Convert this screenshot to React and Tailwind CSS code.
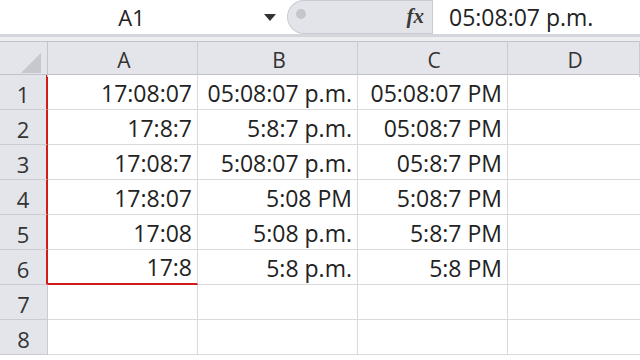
import React from 'react';

const cols = ['A', 'B', 'C', 'D'];

const rows = [
  ['17:08:07', '05:08:07 p.m.', '05:08:07 PM'],
  ['17:8:7', '5:8:7 p.m.', '05:08:7 PM'],
  ['17:08:7', '5:08:07 p.m.', '05:8:7 PM'],
  ['17:8:07', '5:08 PM', '5:08:7 PM'],
  ['17:08', '5:08 p.m.', '5:8:7 PM'],
  ['17:8', '5:8 p.m.', '5:8 PM'],
  ['', '', ''],
  ['', '', ''],
];

const grid = 'grid grid-cols-[48px_150px_160px_150px_1fr]';

const App = () => {
  return (
    <div className="w-[640px] h-[360px] overflow-hidden bg-white text-[#222] font-['Open_Sans',sans-serif]">
      {/* Name box + formula bar */}
      <div className="flex h-[34px] bg-white">
        <div className="w-[287px] flex items-center relative">
          <span className="flex-1 text-center text-[22px] leading-none pr-[34px] pl-[10px]">A1</span>
          <svg width="12" height="7" viewBox="0 0 12 7" className="absolute left-[264px] top-[14px]">
            <path d="M0 0 L12 0 L6 7 Z" fill="#333" />
          </svg>
        </div>
        <div className="w-[145px] rounded-l-full bg-[#e3e4e9] border border-r-0 border-[#c9cbd2] flex items-center relative">
          <div className="absolute left-[8px] top-[8px] w-[10px] h-[10px] rounded-full bg-[#c4c6cc]" />
          <span className="ml-auto mr-[8px] font-['Liberation_Serif',serif] italic font-bold text-[21px] text-[#3a3a3a]">fx</span>
        </div>
        <div className="flex-1 flex items-center pl-[16px] text-[23px] leading-none border-l border-[#c9cbd2]">05:08:07 p.m.</div>
      </div>

      <div className="h-[3px] bg-[#d4d6dc]" />
      <div className="h-[4px] bg-[#eceef1]" />

      {/* Column header */}
      <div className={`${grid} h-[34px] bg-[#e3e5ea] border-t border-b border-[#bfc2c9]`}>
        <div className="relative border-r border-[#c2c5cc]">
          <svg width="20" height="20" viewBox="0 0 20 20" className="absolute right-[6px] bottom-[4px]">
            <path d="M20 0 L20 20 L0 20 Z" fill="#c6c8cd" />
          </svg>
        </div>
        {cols.map((c) => (
          <div key={c} className="flex items-center justify-center pt-[3px] pl-[3px] text-[21px] text-[#333] border-r border-[#c9ccd2]">
            {c}
          </div>
        ))}
      </div>

      {/* Rows */}
      {rows.map((r, i) => (
        <div key={i} className={`${grid} h-[35px]`}>
          <div
            className={`flex items-end justify-center pb-[4px] leading-none text-[22px] text-[#333] bg-[#e3e5ea] border-b border-[#c9ccd2] ${
              i < 6 ? 'border-r-2 border-r-[#d11a1a]' : 'border-r border-r-[#c9ccd2]'
            }`}
          >
            {i + 1}
          </div>
          {r.map((v, j) => (
            <div
              key={j}
              className={`flex items-end justify-end pr-[5px] pb-[4px] leading-none text-[23px] border-r border-[#dadada] ${
                j === 0 && i === 5 ? 'border-b-2 border-b-[#d11a1a]' : 'border-b border-b-[#dadada]'
              }`}
            >
              {v}
            </div>
          ))}
          <div className="border-b border-[#dadada]" />
        </div>
      ))}
    </div>
  );
};

export default App;
